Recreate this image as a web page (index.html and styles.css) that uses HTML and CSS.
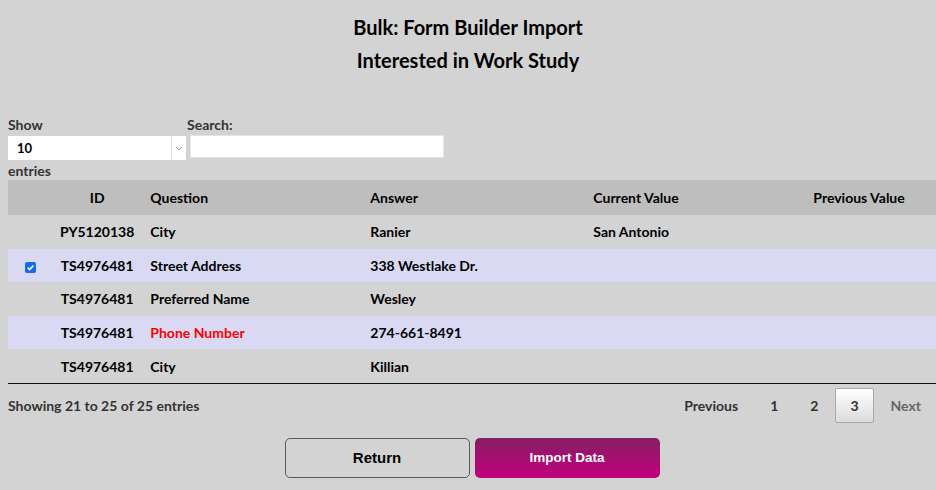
FILE: index.html
```html
<!DOCTYPE html>
<html lang="en">
<head>
<meta charset="utf-8">
<title>Bulk: Form Builder Import</title>
<link rel="stylesheet" href="styles.css">
</head>
<body>
  <header class="page-title">
    <h1>Bulk: Form Builder Import</h1>
    <h2>Interested in Work Study</h2>
  </header>

  <main class="content">
    <div class="controls">
      <div class="length">
        <label class="ctl-label">Show</label>
        <div class="select">
          <span class="select-value">10</span>
          <span class="select-arrow">
            <svg width="8" height="5" viewBox="0 0 8 5"><path d="M1 1l3 3 3-3" fill="none" stroke="#999" stroke-width="1"/></svg>
          </span>
        </div>
        <span class="ctl-label">entries</span>
      </div>
      <div class="filter">
        <label class="ctl-label">Search:</label>
        <input class="search" type="text">
      </div>
    </div>

    <table class="grid">
      <thead>
        <tr>
          <th class="c-check"></th>
          <th class="c-id">ID</th>
          <th class="c-q">Question</th>
          <th class="c-a">Answer</th>
          <th class="c-cur">Current Value</th>
          <th class="c-prev">Previous Value</th>
        </tr>
      </thead>
      <tbody>
        <tr>
          <td class="c-check"></td>
          <td class="c-id">PY5120138</td>
          <td>City</td>
          <td>Ranier</td>
          <td>San Antonio</td>
          <td></td>
        </tr>
        <tr class="alt">
          <td class="c-check"><span class="check"><svg width="9" height="9" viewBox="0 0 9 9"><path d="M1.6 4.6l2 2 3.8-4" fill="none" stroke="#fff" stroke-width="1.6"/></svg></span></td>
          <td class="c-id">TS4976481</td>
          <td>Street Address</td>
          <td>338 Westlake Dr.</td>
          <td></td>
          <td></td>
        </tr>
        <tr>
          <td class="c-check"></td>
          <td class="c-id">TS4976481</td>
          <td>Preferred Name</td>
          <td>Wesley</td>
          <td></td>
          <td></td>
        </tr>
        <tr class="alt">
          <td class="c-check"></td>
          <td class="c-id">TS4976481</td>
          <td class="flag">Phone Number</td>
          <td>274-661-8491</td>
          <td></td>
          <td></td>
        </tr>
        <tr>
          <td class="c-check"></td>
          <td class="c-id">TS4976481</td>
          <td>City</td>
          <td>Killian</td>
          <td></td>
          <td></td>
        </tr>
      </tbody>
    </table>

    <div class="table-foot">
      <div class="info">Showing 21 to 25 of 25 entries</div>
      <nav class="paging">
        <a class="pg">Previous</a>
        <a class="pg">1</a>
        <a class="pg">2</a>
        <a class="pg current">3</a>
        <a class="pg disabled">Next</a>
      </nav>
    </div>

    <div class="actions">
      <button class="btn btn-return">Return</button>
      <button class="btn btn-import">Import Data</button>
    </div>
  </main>
</body>
</html>
```

FILE: styles.css
```css
html, body {
  margin: 0;
  padding: 0;
}

body {
  background: #d3d3d3;
  font-family: "Lato", "Noto Sans", sans-serif;
  color: #000;
  width: 936px;
  overflow: hidden;
}

.page-title {
  padding-top: 10px;
  text-align: center;
}

.page-title h1,
.page-title h2 {
  margin: 0;
  font-size: 20px;
  font-weight: 700;
}

.page-title h1 {
  line-height: 34px;
}

.page-title h2 {
  line-height: 33px;
}

.content {
  padding-left: 8px;
  margin-top: 40px;
}

/* length selector + search */
.controls {
  display: flex;
  align-items: flex-start;
}

.length {
  display: flex;
  flex-direction: column;
  width: 179px;
}

.ctl-label {
  font-size: 14px;
  font-weight: 700;
  color: #333;
  line-height: 16px;
}

.length .ctl-label:last-child {
  line-height: 19px;
  margin-top: 1px;
}

.select {
  display: flex;
  height: 24px;
  width: 178px;
  margin-top: 3px;
  background: #fff;
}

.select-value {
  flex: 1;
  padding-left: 9px;
  font-size: 13px;
  font-weight: 700;
  line-height: 24px;
  border-right: 1px solid #ddd;
}

.select-arrow {
  width: 14px;
  display: flex;
  align-items: center;
  justify-content: center;
}

.filter {
  display: flex;
  flex-direction: column;
}

.search {
  margin: 2px 0 0 3px;
  width: 254px;
  height: 23px;
  box-sizing: border-box;
  border: 1px solid #e4e4e4;
  background: #fff;
  padding: 0;
}

/* data table */
.grid {
  width: 928px;
  border-collapse: collapse;
  font-size: 14px;
  font-weight: 700;
  border-bottom: 1px solid #111;
}

.grid th,
.grid td {
  text-align: left;
  padding: 0 8px;
  white-space: nowrap;
}

.grid th {
  background: #bebebe;
  height: 35px;
}

.grid td {
  height: 33.6px;
}

.grid tbody tr.alt td {
  background: #d9d9f3;
}

.grid .c-check {
  width: 44px;
  text-align: center;
  padding: 0;
}

.grid .c-id {
  width: 74px;
  text-align: center;
}

.grid .c-q {
  width: 204px;
}

.grid .c-a {
  width: 207px;
}

.grid .c-cur {
  width: 204px;
}

.grid .flag {
  color: #f00;
}

.check {
  display: inline-flex;
  align-items: center;
  justify-content: center;
  width: 11px;
  height: 11px;
  border-radius: 2px;
  background: #1769e6;
  vertical-align: middle;
}

/* info + paging */
.table-foot {
  display: flex;
  justify-content: space-between;
  align-items: center;
  margin-top: 4px;
}

.info {
  font-size: 14px;
  font-weight: 700;
  color: #333;
}

.paging {
  display: flex;
  align-items: center;
}

.pg {
  display: block;
  height: 35px;
  line-height: 33px;
  box-sizing: border-box;
  padding: 0 14px;
  margin-left: 2px;
  border: 1px solid transparent;
  border-radius: 2px;
  font-size: 14px;
  font-weight: 700;
  color: #333;
}

.pg.current {
  border-color: #a9a9a9;
  background: linear-gradient(#fff, #dcdcdc);
}

.pg.disabled {
  color: #666;
}

/* action buttons */
.actions {
  display: flex;
  justify-content: center;
  gap: 5px;
  margin-top: 15px;
}

.btn {
  width: 185px;
  height: 40px;
  font-family: "Liberation Sans", Arial, sans-serif;
  font-weight: 700;
  border-radius: 5px;
  cursor: pointer;
}

.btn-return {
  font-size: 15px;
  background: transparent;
  border: 1px solid #5a5a5a;
  color: #000;
}

.btn-import {
  font-size: 13.5px;
  border: none;
  color: #fff;
  background: linear-gradient(#861e63, #c2007e);
}
```
